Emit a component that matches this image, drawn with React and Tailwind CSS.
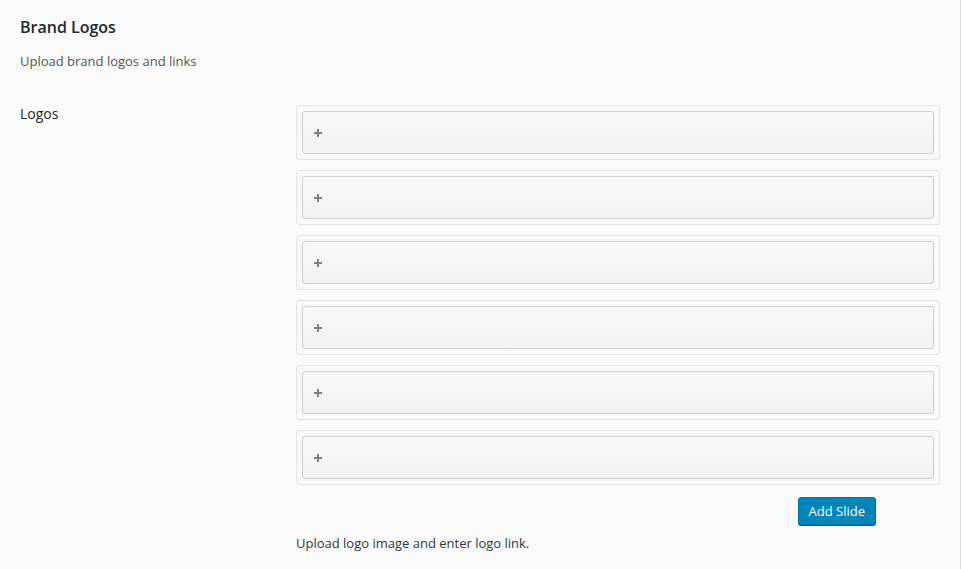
export default function App() {
  const rows = [0, 1, 2, 3, 4, 5];
  return (
    <div className="min-h-[569px] w-[961px] bg-[#fbfbfb] border-r border-[#dcdcdc] text-[#23282d]" style={{ fontFamily: '"Open Sans", "Noto Sans", sans-serif' }}>
      <div className="pl-5 pr-[20px]">
        <h2 className="pt-[17px] text-[16px] leading-[20px] font-semibold text-[#23282d]">Brand Logos</h2>
        <p className="mt-[15px] text-[13px] leading-[18px] text-[#555]">Upload brand logos and links</p>
        <div className="mt-[35px] flex">
          <div className="w-[276px] text-[14px] leading-[18px] font-medium text-[#23282d]">Logos</div>
          <div className="w-[644px]">
            <div className="flex flex-col gap-[10px]">
              {rows.map((i) => (
                <div key={i} className="rounded-[3px] border border-[#e5e5e5] bg-[#f9f9f9] p-[5px]">
                  <div className="flex h-[43px] items-center rounded-[3px] border border-[#cfcfcf] bg-gradient-to-b from-[#f9f9f9] to-[#f2f2f2] pl-[11px]">
                    <svg width="8" height="8" viewBox="0 0 8 8" className="block">
                      <path d="M0 4h8M4 0v8" stroke="#808080" strokeWidth="2" />
                    </svg>
                  </div>
                </div>
              ))}
            </div>
            <div className="mt-[12px] flex justify-end pr-[64px]">
              <button className="h-[28px] rounded-[3px] border border-[#0073aa] bg-[#0085ba] px-[10px] text-[13px] leading-[26px] text-white shadow-[0_1px_0_#006799]">Add Slide</button>
            </div>
            <p className="mt-[9px] text-[13px] leading-[18px] text-[#32373c]">Upload logo image and enter logo link.</p>
          </div>
        </div>
      </div>
    </div>
  );
}
